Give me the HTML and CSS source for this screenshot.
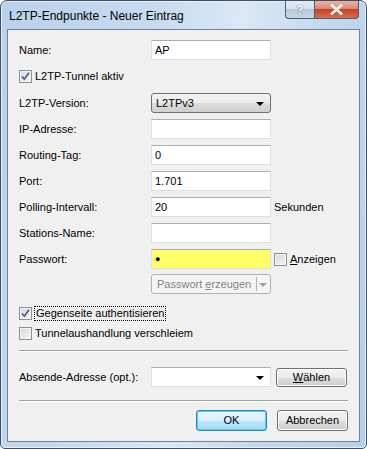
FILE: index.html
```html
<!DOCTYPE html>
<html lang="de">
<head>
    <meta charset="UTF-8">
    <title>L2TP-Endpunkte - Neuer Eintrag</title>
    <link rel="stylesheet" href="styles.css">
</head>
<body>
    <div class="window">
        <!-- Title bar -->
        <div class="titlebar">
            <span class="title">L2TP-Endpunkte - Neuer Eintrag</span>
            <div class="caption-buttons">
                <span class="cap-btn help">?</span>
                <span class="cap-btn close">
                    <svg width="13" height="11" viewBox="0 0 13 11"><path d="M2 1.5 L11 9.5 M11 1.5 L2 9.5" stroke="#fff" stroke-width="2.6" stroke-linecap="square"/><path d="M2 1.5 L11 9.5 M11 1.5 L2 9.5" stroke="#5a2a20" stroke-width="0.6" opacity="0.25"/></svg>
                </span>
            </div>
        </div>

        <div class="client">
            <div class="form">
                <label>Name:</label>
                <div class="edit">AP</div>
                <span></span>

                <div class="check-row full">
                    <span class="cb checked"><svg width="11" height="11" viewBox="0 0 11 11"><path d="M2 5.5 L4.3 8.2 L9 1.8" fill="none" stroke="#4a5d8e" stroke-width="1.7"/></svg></span>
                    <span>L2TP-Tunnel aktiv</span>
                </div>

                <label>L2TP-Version:</label>
                <div class="combo">L2TPv3<span class="arrow"></span></div>
                <span></span>

                <label>IP-Adresse:</label>
                <div class="edit"></div>
                <span></span>

                <label>Routing-Tag:</label>
                <div class="edit">0</div>
                <span></span>

                <label>Port:</label>
                <div class="edit">1.701</div>
                <span></span>

                <label>Polling-Intervall:</label>
                <div class="edit">20</div>
                <span class="unit">Sekunden</span>

                <label>Stations-Name:</label>
                <div class="edit"></div>
                <span></span>

                <label>Passwort:</label>
                <div class="edit secret">&#9679;</div>
                <div class="check-row">
                    <span class="cb"></span>
                    <span><u>A</u>nzeigen</span>
                </div>

                <span></span>
                <div class="split-btn disabled">
                    <span class="split-label">Passwort <u>e</u>rzeugen</span>
                    <span class="split-arrow"><span class="arrow gray"></span></span>
                </div>
                <span></span>
            </div>

            <div class="checks">
                <div class="check-row">
                    <span class="cb checked"><svg width="11" height="11" viewBox="0 0 11 11"><path d="M2 5.5 L4.3 8.2 L9 1.8" fill="none" stroke="#4a5d8e" stroke-width="1.7"/></svg></span>
                    <span class="focus">Gegenseite authentisieren</span>
                </div>
                <div class="check-row">
                    <span class="cb"></span>
                    <span>Tunnelaushandlung verschleiem</span>
                </div>
            </div>

            <div class="footer">
                <div class="separator"></div>

                <div class="source-row">
                    <label>Absende-Adresse (opt.):</label>
                    <div class="edit combo-edit"><span class="arrow"></span></div>
                    <div class="btn pick"><u>W</u>ählen</div>
                </div>

                <div class="separator"></div>

                <div class="dialog-buttons">
                    <div class="btn default">OK</div>
                    <div class="btn">Abbrechen</div>
                </div>
            </div>
        </div>
    </div>
</body>
</html>
```

FILE: styles.css
```css
body {
    margin: 0;
    background-color: #ffffff;
    font-family: "Liberation Sans", Arial, sans-serif;
    font-size: 11px;
    line-height: 13px;
    color: #000;
}
.window {
    width: 367px;
    height: 449px;
    box-sizing: border-box;
    border: 1px solid #3d4f66;
    border-radius: 7px 7px 5px 5px;
    padding: 0 6px 6px 6px;
    background: linear-gradient(100deg, #b9d1ea 0%, #c6dbf0 35%, #dbe8f5 55%, #c3d8ee 75%, #b7cfe8 100%);
    box-shadow: inset 0 0 0 1px #e6f0fa;
    display: flex;
    flex-direction: column;
    overflow: hidden;
}
.titlebar {
    height: 28px;
    flex-shrink: 0;
    display: flex;
    align-items: flex-start;
    justify-content: space-between;
}
.title {
    font-size: 12px;
    margin: 9px 0 0 2px;
    color: #000;
}
.caption-buttons {
    display: flex;
    margin-right: 1px;
}
.cap-btn {
    height: 18px;
    box-sizing: border-box;
    border: 1px solid #4b5c73;
    border-top: none;
    display: flex;
    align-items: center;
    justify-content: center;
}
.help {
    width: 29px;
    border-radius: 0 0 0 4px;
    border-right: none;
    background: linear-gradient(#e4ecf4 0%, #d5e1ec 45%, #b6c7d8 50%, #c9d7e4 100%);
    color: #fff;
    font-weight: bold;
    font-size: 13px;
    text-shadow: 0 0 1px #4b5c73, 0 0 1px #4b5c73;
}
.close {
    width: 45px;
    border-radius: 0 0 4px 0;
    background: linear-gradient(#eab3a4 0%, #dc8a76 45%, #c6452d 50%, #d66d52 100%);
}
.client {
    flex: 1;
    min-height: 0;
    background-color: #f0f0f0;
    border: 1px solid #6f8299;
    padding: 10px 11px 10px 11px;
    display: flex;
    flex-direction: column;
}
.form {
    display: grid;
    grid-template-columns: 132px 120px auto;
    grid-template-rows: 20px 21px repeat(8, 20px);
    row-gap: 6px;
    align-items: center;
}
.full {
    grid-column: 1 / 4;
}
.edit {
    height: 20px;
    box-sizing: border-box;
    background: #fff;
    border: 1px solid #dbdfe6;
    border-top-color: #abadb3;
    padding: 3px 0 0 3px;
    position: relative;
}
.secret {
    background: #ffff66;
    font-size: 9px;
    padding-top: 3px;
}
.unit {
    margin-left: 3px;
}
.combo {
    height: 20px;
    box-sizing: border-box;
    border: 1px solid #707070;
    border-radius: 3px;
    background: linear-gradient(#f2f2f2 0%, #ebebeb 50%, #dddddd 51%, #cfcfcf 100%);
    padding: 3px 0 0 4px;
    position: relative;
}
.arrow {
    position: absolute;
    right: 6px;
    top: 8px;
    width: 0;
    height: 0;
    border-left: 4px solid transparent;
    border-right: 4px solid transparent;
    border-top: 4px solid #000;
}
.arrow.gray {
    border-top-color: #a0a0a0;
    right: 3px;
    top: 6px;
}
.check-row {
    display: flex;
    align-items: center;
    gap: 3px;
    height: 20px;
}
.cb {
    width: 13px;
    height: 13px;
    box-sizing: border-box;
    border: 1px solid #8e8f8f;
    background: linear-gradient(135deg, #d6d6d6 0%, #f6f6f6 100%);
    box-shadow: inset 0 0 0 1px #f4f4f4;
    display: flex;
    align-items: center;
    justify-content: center;
    flex-shrink: 0;
}
.form .check-row:not(.full) {
    margin-left: 3px;
}
.split-btn {
    height: 20px;
    margin-top: -2px;
    box-sizing: border-box;
    border: 1px solid #adb2b5;
    border-radius: 3px;
    background: #f4f4f4;
    color: #838383;
    display: flex;
}
.split-label {
    flex: 1;
    padding: 3px 0 0 5px;
}
.split-arrow {
    width: 13px;
    border-left: 1px solid #adb2b5;
    margin: 2px 0;
    position: relative;
}
.checks {
    margin-top: 8px;
    display: flex;
    flex-direction: column;
}
.focus {
    outline: 1px dotted #000;
    padding: 0 1px;
}
.footer {
    margin-top: auto;
    display: flex;
    flex-direction: column;
}
.separator {
    height: 0;
    border-top: 1px solid #a0a0a0;
    border-bottom: 1px solid #ffffff;
}
.source-row {
    display: grid;
    grid-template-columns: 132px 120px 76px;
    height: 20px;
    align-items: center;
    margin: 15px 0 13px 0;
}
.btn {
    height: 20px;
    box-sizing: border-box;
    border: 1px solid #707070;
    border-radius: 3px;
    background: linear-gradient(#f2f2f2 0%, #ebebeb 50%, #dddddd 51%, #cfcfcf 100%);
    box-shadow: inset 0 0 0 1px #fcfcfc;
    display: flex;
    align-items: center;
    justify-content: center;
}
.pick {
    width: 71px;
    height: 19px;
    margin-left: 5px;
}
.dialog-buttons {
    display: flex;
    justify-content: flex-end;
    gap: 10px;
    margin-top: 8px;
}
.dialog-buttons .btn {
    width: 71px;
    height: 21px;
}
.btn.default {
    border-color: #3c7fb1;
    background: linear-gradient(#eaf6fd 0%, #d9f0fc 50%, #bee6fd 51%, #a7d9f5 100%);
    box-shadow: inset 0 0 0 1px #48d1f4;
}
```
